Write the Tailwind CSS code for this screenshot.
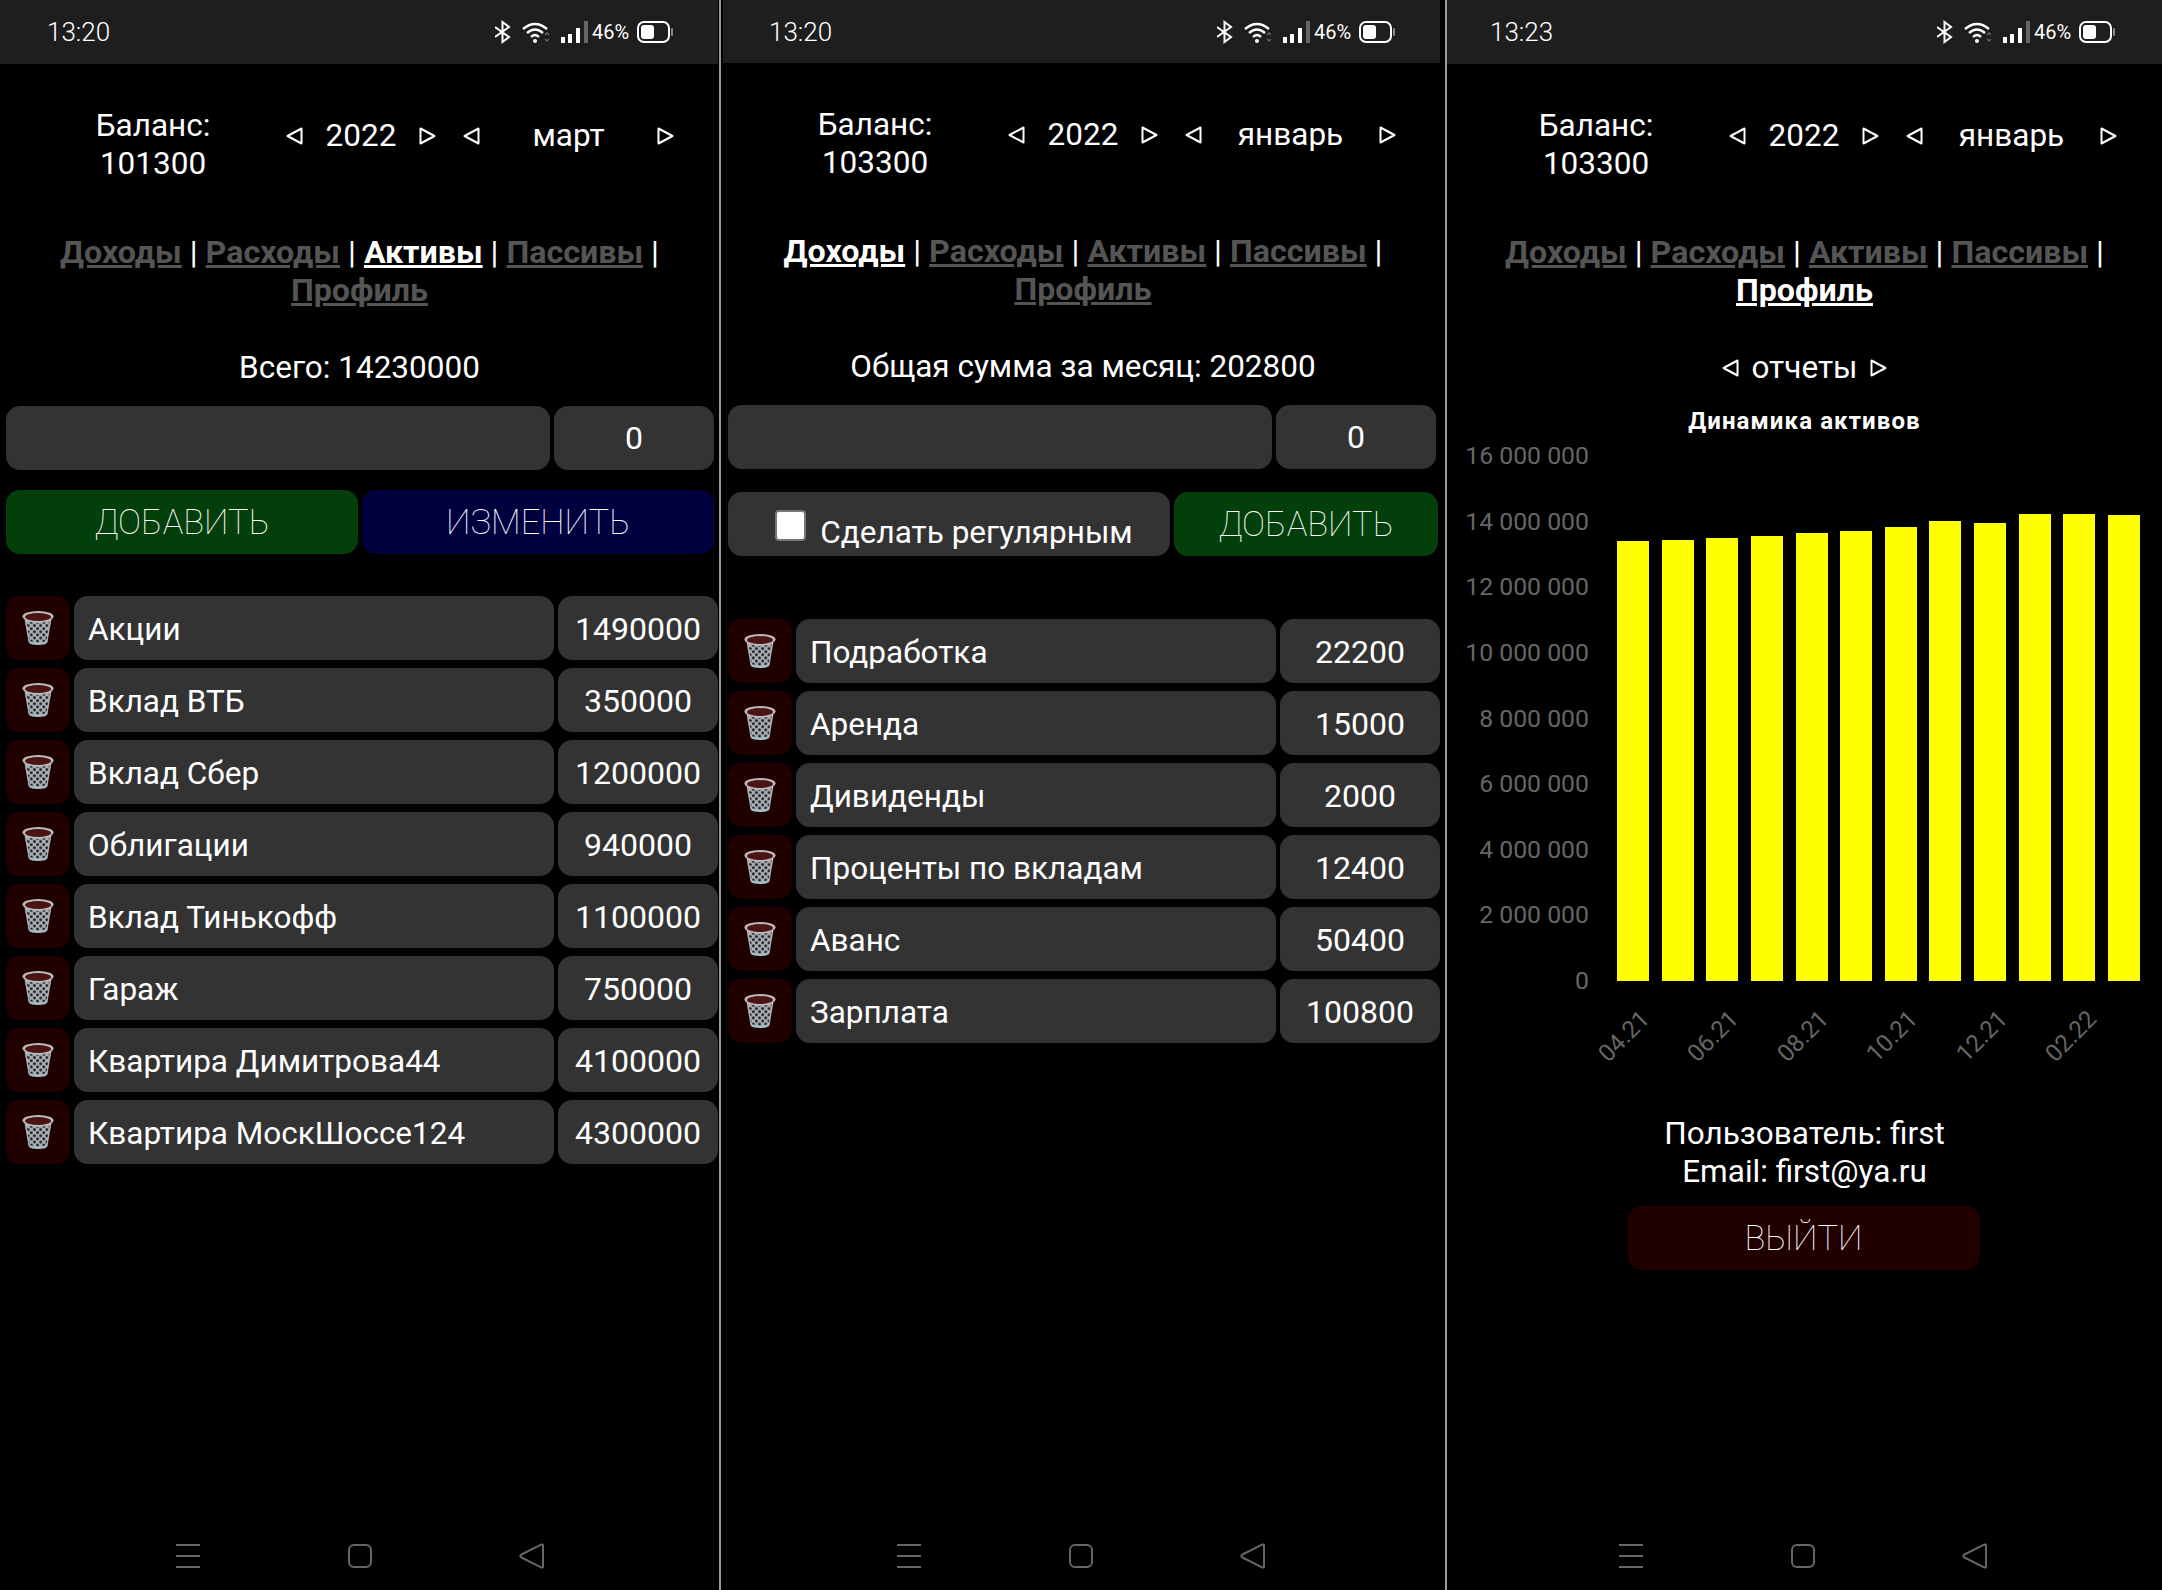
<!DOCTYPE html>
<html lang="en">
<head>
  <meta charset="UTF-8">
  <title>Баланс</title>
  <script src="https://cdn.jsdelivr.net/npm/@tailwindcss/browser@4"></script>
</head>
<body class="bg-black">
  <!-- shared icons -->
  <svg width="0" height="0" class="absolute">
    <defs>
      <linearGradient id="trash-body" x1="0" y1="0" x2="0" y2="1">
        <stop offset="0" stop-color="#b5b5b5"/>
        <stop offset="0.6" stop-color="#a8b0b4"/>
        <stop offset="1" stop-color="#9fc0cc"/>
      </linearGradient>
      <pattern id="trash-dots" width="4.4" height="4.4" patternUnits="userSpaceOnUse" patternTransform="rotate(45)">
        <rect width="4.4" height="4.4" fill="#aab2b6"/>
        <circle cx="2.2" cy="2.2" r="1.5" fill="#26262a"/>
      </pattern>
      <symbol id="trash" viewBox="0 0 32 36">
        <path d="M2 6 L6.5 32 Q7.5 35 16 35 Q24.500 35 25.500 32 L30 6 Z" fill="url(#trash-body)"/>
        <path d="M4.500 11 L7.500 31 Q16 34 24.500 31 L27.500 11 Q16 15 4.500 11 Z" fill="url(#trash-dots)"/>
        <ellipse cx="16" cy="6.500" rx="15.500" ry="5.500" fill="#bdbdbd"/>
        <ellipse cx="16" cy="7" rx="13" ry="4" fill="#4a1416"/>
      </symbol>
      <symbol id="tri-l" viewBox="0 0 17 18">
        <path d="M15.5 1.5 V16.5 L1.5 9 Z" fill="none" stroke="currentColor" stroke-width="2" stroke-linejoin="round"/>
      </symbol>
      <symbol id="tri-r" viewBox="0 0 17 18">
        <path d="M1.5 1.5 V16.5 L15.5 9 Z" fill="none" stroke="currentColor" stroke-width="2" stroke-linejoin="round"/>
      </symbol>
      <symbol id="status-icons" viewBox="0 0 178 24">
        <path d="M0 7 L14 17 L7.5 22 V2 L14 7 L0 17" fill="none" stroke="#fff" stroke-width="2"/>
        <path d="M28 9 Q40 -1 52 9 M32 13 Q40 6 48 13 M36 17 Q40 13 44 17" fill="none" stroke="#fff" stroke-width="2.4"/>
        <circle cx="40" cy="21" r="2" fill="#fff"/>
        <path d="M50 15 l2 -2 l2 2 M50 19 l2 2 l2 -2" fill="none" stroke="#666" stroke-width="1.4"/>
        <rect x="66" y="17" width="4" height="6" fill="#fff"/>
        <rect x="73" y="14" width="4" height="9" fill="#fff"/>
        <rect x="81" y="8" width="4" height="15" fill="#fff"/>
        <rect x="89" y="1" width="4" height="22" fill="#666"/>
        <rect x="143" y="2" width="31" height="20" rx="6" fill="none" stroke="#fff" stroke-width="2"/>
        <rect x="146" y="5" width="13" height="14" rx="3" fill="#fff"/>
        <rect x="176" y="8" width="2" height="8" rx="1" fill="#888"/>
      </symbol>
      <symbol id="nav-icons" viewBox="0 0 368 26">
        <path d="M0 2 H24 M0 13 H24 M0 24 H24" stroke="#666" stroke-width="2"/>
        <rect x="173" y="2" width="22" height="22" rx="5" fill="none" stroke="#666" stroke-width="2"/>
        <path d="M367 2.5 Q367 1 365 1.7 L345.5 11.5 Q343 13 345.5 14.5 L365 24.3 Q367 25 367 23.5 Z" fill="none" stroke="#666" stroke-width="2"/>
      </symbol>
    </defs>
  </svg>

  <div class="flex h-[1590px] w-[2162px] overflow-hidden font-['Roboto',sans-serif] text-[31.5px] leading-[38px] text-white">

    <!-- Активы -->
    <section class="relative w-[719px] shrink-0">
      <div class="mr-px flex h-16 items-center justify-between bg-[#1e1e1e] pl-[47px] pr-[45px]">
        <span class="text-[26px] font-light">13:20</span>
        <div class="relative h-6 w-[178px]">
          <svg class="h-6 w-[178px]"><use href="#status-icons"/></svg>
          <span class="absolute left-[97px] top-0 text-[20px] leading-6">46%</span>
        </div>
      </div>
      <div class="flex pt-[43px]">
        <div class="ml-[50px] w-[206px] text-center">Баланс:<br>101300</div>
        <div class="ml-[30px] flex h-[58px] w-[150px] items-center justify-between">
          <svg class="h-[18px] w-[17px]"><use href="#tri-l"/></svg><span>2022</span><svg class="h-[18px] w-[17px]"><use href="#tri-r"/></svg>
        </div>
        <div class="ml-[27px] flex h-[58px] w-[211px] items-center justify-between">
          <svg class="h-[18px] w-[17px]"><use href="#tri-l"/></svg><span>март</span><svg class="h-[18px] w-[17px]"><use href="#tri-r"/></svg>
        </div>
      </div>
      <nav class="mt-[50px] px-[40px] text-center text-[32.2px] font-bold text-[#555]">
        <a class="underline">Доходы</a> <span class="font-normal text-white">|</span>
        <a class="underline">Расходы</a> <span class="font-normal text-white">|</span>
        <a class="text-white underline">Активы</a> <span class="font-normal text-white">|</span>
        <a class="underline">Пассивы</a> <span class="font-normal text-white">|</span>
        <a class="underline">Профиль</a>
      </nav>
      <p class="mt-10 text-center">Всего: 14230000</p>
      <div class="mt-[19px] flex gap-1 pl-1.5 pr-[5px]">
        <div class="h-16 flex-1 rounded-[14px] bg-[#333]"></div>
        <div class="flex h-16 w-40 items-center justify-center rounded-[14px] bg-[#333] text-[32px]">0</div>
      </div>
      <div class="mt-5 flex gap-1 pl-1.5 pr-[5px]">
        <button class="h-16 flex-1 rounded-[14px] bg-[#033f0b] text-[34.5px] font-thin text-white">ДОБАВИТЬ</button>
        <button class="h-16 flex-1 rounded-[14px] bg-[#00003f] text-[34.5px] font-thin text-white">ИЗМЕНИТЬ</button>
      </div>
      <div class="mt-[42px] flex flex-col gap-2 pl-1.5 pr-px">
        <div class="flex gap-1"><div class="flex h-16 w-16 items-center justify-center rounded-[14px] bg-[#210000]"><svg class="h-[36px] w-[32px]"><use href="#trash"/></svg></div><div class="flex h-16 flex-1 items-center rounded-[14px] bg-[#333] pl-3.5 pt-[3px]">Акции</div><div class="flex h-16 w-40 items-center justify-center rounded-[14px] bg-[#333] pt-[2px] text-[32px]">1490000</div></div>
        <div class="flex gap-1"><div class="flex h-16 w-16 items-center justify-center rounded-[14px] bg-[#210000]"><svg class="h-[36px] w-[32px]"><use href="#trash"/></svg></div><div class="flex h-16 flex-1 items-center rounded-[14px] bg-[#333] pl-3.5 pt-[3px]">Вклад ВТБ</div><div class="flex h-16 w-40 items-center justify-center rounded-[14px] bg-[#333] pt-[2px] text-[32px]">350000</div></div>
        <div class="flex gap-1"><div class="flex h-16 w-16 items-center justify-center rounded-[14px] bg-[#210000]"><svg class="h-[36px] w-[32px]"><use href="#trash"/></svg></div><div class="flex h-16 flex-1 items-center rounded-[14px] bg-[#333] pl-3.5 pt-[3px]">Вклад Сбер</div><div class="flex h-16 w-40 items-center justify-center rounded-[14px] bg-[#333] pt-[2px] text-[32px]">1200000</div></div>
        <div class="flex gap-1"><div class="flex h-16 w-16 items-center justify-center rounded-[14px] bg-[#210000]"><svg class="h-[36px] w-[32px]"><use href="#trash"/></svg></div><div class="flex h-16 flex-1 items-center rounded-[14px] bg-[#333] pl-3.5 pt-[3px]">Облигации</div><div class="flex h-16 w-40 items-center justify-center rounded-[14px] bg-[#333] pt-[2px] text-[32px]">940000</div></div>
        <div class="flex gap-1"><div class="flex h-16 w-16 items-center justify-center rounded-[14px] bg-[#210000]"><svg class="h-[36px] w-[32px]"><use href="#trash"/></svg></div><div class="flex h-16 flex-1 items-center rounded-[14px] bg-[#333] pl-3.5 pt-[3px]">Вклад Тинькофф</div><div class="flex h-16 w-40 items-center justify-center rounded-[14px] bg-[#333] pt-[2px] text-[32px]">1100000</div></div>
        <div class="flex gap-1"><div class="flex h-16 w-16 items-center justify-center rounded-[14px] bg-[#210000]"><svg class="h-[36px] w-[32px]"><use href="#trash"/></svg></div><div class="flex h-16 flex-1 items-center rounded-[14px] bg-[#333] pl-3.5 pt-[3px]">Гараж</div><div class="flex h-16 w-40 items-center justify-center rounded-[14px] bg-[#333] pt-[2px] text-[32px]">750000</div></div>
        <div class="flex gap-1"><div class="flex h-16 w-16 items-center justify-center rounded-[14px] bg-[#210000]"><svg class="h-[36px] w-[32px]"><use href="#trash"/></svg></div><div class="flex h-16 flex-1 items-center rounded-[14px] bg-[#333] pl-3.5 pt-[3px]">Квартира Димитрова44</div><div class="flex h-16 w-40 items-center justify-center rounded-[14px] bg-[#333] pt-[2px] text-[32px]">4100000</div></div>
        <div class="flex gap-1"><div class="flex h-16 w-16 items-center justify-center rounded-[14px] bg-[#210000]"><svg class="h-[36px] w-[32px]"><use href="#trash"/></svg></div><div class="flex h-16 flex-1 items-center rounded-[14px] bg-[#333] pl-3.5 pt-[3px]">Квартира МоскШоссе124</div><div class="flex h-16 w-40 items-center justify-center rounded-[14px] bg-[#333] pt-[2px] text-[32px]">4300000</div></div>
      </div>
      <svg class="absolute bottom-[21px] left-[176px] h-[26px] w-[368px]"><use href="#nav-icons"/></svg>
    </section>

    <div class="w-[2px] shrink-0 bg-[#999]"></div>

    <!-- Доходы -->
    <section class="relative ml-px mr-px w-[722px] shrink-0">
      <div class="ml-px mr-1 flex h-[63px] items-center justify-between bg-[#1e1e1e] pl-[46px] pr-[45px]">
        <span class="text-[26px] font-light">13:20</span>
        <div class="relative h-6 w-[178px]">
          <svg class="h-6 w-[178px]"><use href="#status-icons"/></svg>
          <span class="absolute left-[97px] top-0 text-[20px] leading-6">46%</span>
        </div>
      </div>
      <div class="flex pt-[43px]">
        <div class="ml-[50px] w-[206px] text-center">Баланс:<br>103300</div>
        <div class="ml-[30px] flex h-[58px] w-[150px] items-center justify-between">
          <svg class="h-[18px] w-[17px]"><use href="#tri-l"/></svg><span>2022</span><svg class="h-[18px] w-[17px]"><use href="#tri-r"/></svg>
        </div>
        <div class="ml-[27px] flex h-[58px] w-[211px] items-center justify-between">
          <svg class="h-[18px] w-[17px]"><use href="#tri-l"/></svg><span>январь</span><svg class="h-[18px] w-[17px]"><use href="#tri-r"/></svg>
        </div>
      </div>
      <nav class="mt-[50px] px-[40px] text-center text-[32.2px] font-bold text-[#555]">
        <a class="text-white underline">Доходы</a> <span class="font-normal text-white">|</span>
        <a class="underline">Расходы</a> <span class="font-normal text-white">|</span>
        <a class="underline">Активы</a> <span class="font-normal text-white">|</span>
        <a class="underline">Пассивы</a> <span class="font-normal text-white">|</span>
        <a class="underline">Профиль</a>
      </nav>
      <p class="mt-10 text-center">Общая сумма за месяц: 202800</p>
      <div class="mt-[19px] flex gap-1 pl-1.5 pr-2">
        <div class="h-16 flex-1 rounded-[14px] bg-[#333]"></div>
        <div class="flex h-16 w-40 items-center justify-center rounded-[14px] bg-[#333] text-[32px]">0</div>
      </div>
      <div class="mt-[23px] flex gap-1 pl-1.5 pr-1.5">
        <label class="flex h-16 flex-1 items-center justify-center gap-[14px] rounded-[14px] bg-[#333] pl-[10px] pt-[14px]">
          <span class="mb-3 h-[31px] w-[31px] rounded-[4px] border-2 border-[#777] bg-white"></span>
          <span class="mt-1">Сделать регулярным</span>
        </label>
        <button class="h-16 w-[264px] rounded-[14px] bg-[#033f0b] text-[34.5px] font-thin text-white">ДОБАВИТЬ</button>
      </div>
      <div class="mt-[63px] flex flex-col gap-2 pl-1.5 pr-1">
        <div class="flex gap-1"><div class="flex h-16 w-16 items-center justify-center rounded-[14px] bg-[#210000]"><svg class="h-[36px] w-[32px]"><use href="#trash"/></svg></div><div class="flex h-16 flex-1 items-center rounded-[14px] bg-[#333] pl-3.5 pt-[3px]">Подработка</div><div class="flex h-16 w-40 items-center justify-center rounded-[14px] bg-[#333] pt-[2px] text-[32px]">22200</div></div>
        <div class="flex gap-1"><div class="flex h-16 w-16 items-center justify-center rounded-[14px] bg-[#210000]"><svg class="h-[36px] w-[32px]"><use href="#trash"/></svg></div><div class="flex h-16 flex-1 items-center rounded-[14px] bg-[#333] pl-3.5 pt-[3px]">Аренда</div><div class="flex h-16 w-40 items-center justify-center rounded-[14px] bg-[#333] pt-[2px] text-[32px]">15000</div></div>
        <div class="flex gap-1"><div class="flex h-16 w-16 items-center justify-center rounded-[14px] bg-[#210000]"><svg class="h-[36px] w-[32px]"><use href="#trash"/></svg></div><div class="flex h-16 flex-1 items-center rounded-[14px] bg-[#333] pl-3.5 pt-[3px]">Дивиденды</div><div class="flex h-16 w-40 items-center justify-center rounded-[14px] bg-[#333] pt-[2px] text-[32px]">2000</div></div>
        <div class="flex gap-1"><div class="flex h-16 w-16 items-center justify-center rounded-[14px] bg-[#210000]"><svg class="h-[36px] w-[32px]"><use href="#trash"/></svg></div><div class="flex h-16 flex-1 items-center rounded-[14px] bg-[#333] pl-3.5 pt-[3px]">Проценты по вкладам</div><div class="flex h-16 w-40 items-center justify-center rounded-[14px] bg-[#333] pt-[2px] text-[32px]">12400</div></div>
        <div class="flex gap-1"><div class="flex h-16 w-16 items-center justify-center rounded-[14px] bg-[#210000]"><svg class="h-[36px] w-[32px]"><use href="#trash"/></svg></div><div class="flex h-16 flex-1 items-center rounded-[14px] bg-[#333] pl-3.5 pt-[3px]">Аванс</div><div class="flex h-16 w-40 items-center justify-center rounded-[14px] bg-[#333] pt-[2px] text-[32px]">50400</div></div>
        <div class="flex gap-1"><div class="flex h-16 w-16 items-center justify-center rounded-[14px] bg-[#210000]"><svg class="h-[36px] w-[32px]"><use href="#trash"/></svg></div><div class="flex h-16 flex-1 items-center rounded-[14px] bg-[#333] pl-3.5 pt-[3px]">Зарплата</div><div class="flex h-16 w-40 items-center justify-center rounded-[14px] bg-[#333] pt-[2px] text-[32px]">100800</div></div>
      </div>
      <svg class="absolute bottom-[21px] left-[175px] h-[26px] w-[368px]"><use href="#nav-icons"/></svg>
    </section>

    <div class="w-[2px] shrink-0 bg-[#999]"></div>

    <!-- Профиль -->
    <section class="relative flex-1">
      <div class="flex h-16 items-center justify-between bg-[#1e1e1e] pl-[43px] pr-[47px]">
        <span class="text-[26px] font-light">13:23</span>
        <div class="relative h-6 w-[178px]">
          <svg class="h-6 w-[178px]"><use href="#status-icons"/></svg>
          <span class="absolute left-[97px] top-0 text-[20px] leading-6">46%</span>
        </div>
      </div>
      <div class="flex pt-[43px]">
        <div class="ml-[46px] w-[206px] text-center">Баланс:<br>103300</div>
        <div class="ml-[30px] flex h-[58px] w-[150px] items-center justify-between">
          <svg class="h-[18px] w-[17px]"><use href="#tri-l"/></svg><span>2022</span><svg class="h-[18px] w-[17px]"><use href="#tri-r"/></svg>
        </div>
        <div class="ml-[27px] flex h-[58px] w-[211px] items-center justify-between">
          <svg class="h-[18px] w-[17px]"><use href="#tri-l"/></svg><span>январь</span><svg class="h-[18px] w-[17px]"><use href="#tri-r"/></svg>
        </div>
      </div>
      <nav class="mt-[50px] px-[36px] text-center text-[32.2px] font-bold text-[#555]">
        <a class="underline">Доходы</a> <span class="font-normal text-white">|</span>
        <a class="underline">Расходы</a> <span class="font-normal text-white">|</span>
        <a class="underline">Активы</a> <span class="font-normal text-white">|</span>
        <a class="underline">Пассивы</a> <span class="font-normal text-white">|</span>
        <a class="text-white underline">Профиль</a>
      </nav>
      <div class="mt-10 flex items-center justify-center gap-[12px]">
        <svg class="h-[18px] w-[17px]"><use href="#tri-l"/></svg><span>отчеты</span><svg class="h-[18px] w-[17px]"><use href="#tri-r"/></svg>
      </div>
      <h3 class="mt-5 text-center text-2xl leading-7 font-bold tracking-[1.1px]">Динамика активов</h3>
      <!-- chart -->
      <div class="relative mt-[21px] flex h-[525px] pr-[22px]">
        <div class="mt-[-14px] mb-[-14px] flex w-[142px] flex-col justify-between text-right text-[24.8px] leading-7 text-[#666]">
          <span>16 000 000</span><span>14 000 000</span><span>12 000 000</span><span>10 000 000</span><span>8 000 000</span><span>6 000 000</span><span>4 000 000</span><span>2 000 000</span><span>0</span>
        </div>
        <div class="ml-7 flex flex-1 items-end gap-[12.7px]">
          <div class="h-[440px] flex-1 bg-[#ff0]"></div>
          <div class="h-[441px] flex-1 bg-[#ff0]"></div>
          <div class="h-[443px] flex-1 bg-[#ff0]"></div>
          <div class="h-[445px] flex-1 bg-[#ff0]"></div>
          <div class="h-[448px] flex-1 bg-[#ff0]"></div>
          <div class="h-[450px] flex-1 bg-[#ff0]"></div>
          <div class="h-[454px] flex-1 bg-[#ff0]"></div>
          <div class="h-[460px] flex-1 bg-[#ff0]"></div>
          <div class="h-[458px] flex-1 bg-[#ff0]"></div>
          <div class="h-[467px] flex-1 bg-[#ff0]"></div>
          <div class="h-[467px] flex-1 bg-[#ff0]"></div>
          <div class="h-[466px] flex-1 bg-[#ff0]"></div>
        </div>
        <span class="absolute left-[128px] top-[549px] origin-top-right -rotate-45 text-2xl leading-7 text-[#666]">04.21</span>
        <span class="absolute left-[217px] top-[549px] origin-top-right -rotate-45 text-2xl leading-7 text-[#666]">06.21</span>
        <span class="absolute left-[307px] top-[549px] origin-top-right -rotate-45 text-2xl leading-7 text-[#666]">08.21</span>
        <span class="absolute left-[396px] top-[549px] origin-top-right -rotate-45 text-2xl leading-7 text-[#666]">10.21</span>
        <span class="absolute left-[486px] top-[549px] origin-top-right -rotate-45 text-2xl leading-7 text-[#666]">12.21</span>
        <span class="absolute left-[575px] top-[549px] origin-top-right -rotate-45 text-2xl leading-7 text-[#666]">02.22</span>
      </div>
      <p class="mt-[134px] text-center">Пользователь: first<br>Email: first@ya.ru</p>
      <button class="mx-auto mt-[15px] block h-16 w-[352px] -translate-x-px rounded-[14px] bg-[#210000] text-[34.5px] font-thin text-white">ВЫЙТИ</button>
      <svg class="absolute bottom-[21px] left-[172px] h-[26px] w-[368px]"><use href="#nav-icons"/></svg>
    </section>
  </div>
</body>
</html>
